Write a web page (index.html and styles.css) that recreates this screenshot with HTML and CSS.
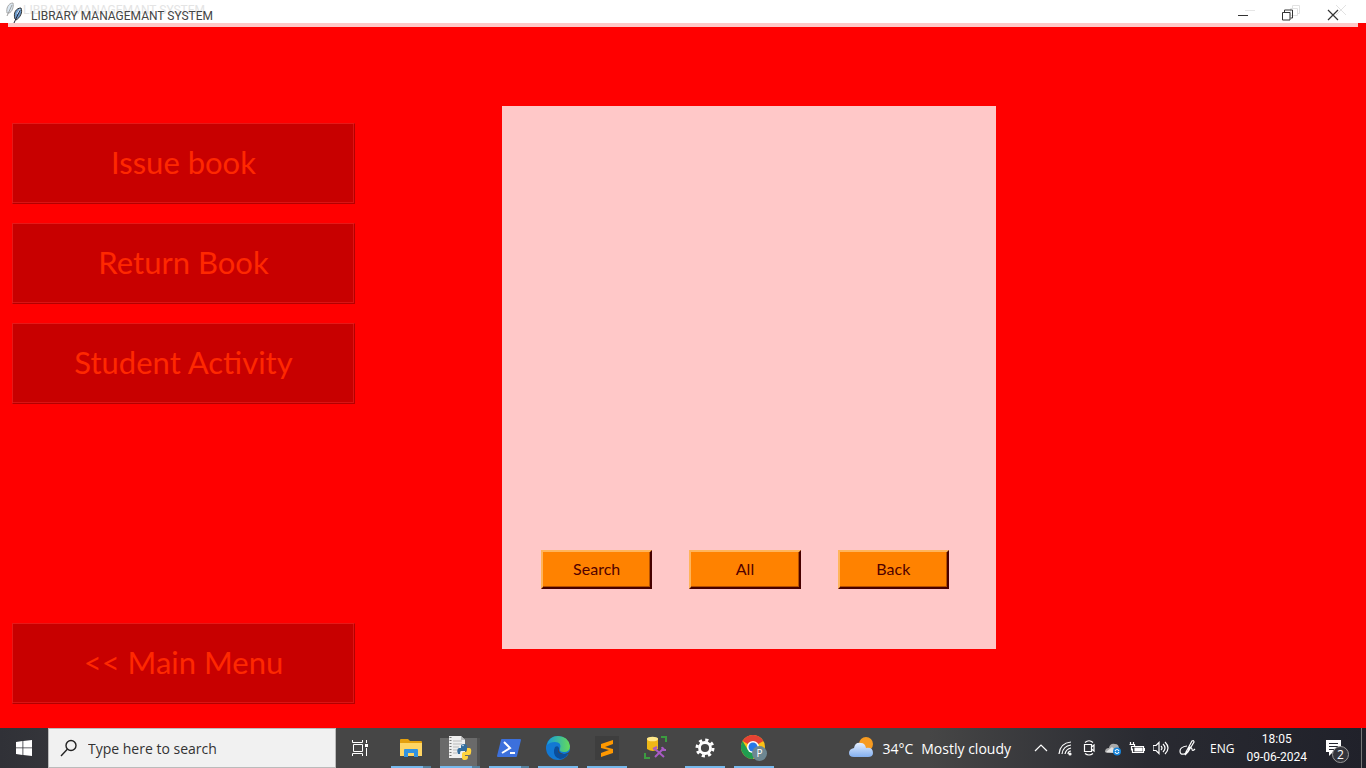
FILE: index.html
```html
<!DOCTYPE html>
<html lang="en">
<head>
<meta charset="utf-8">
<title>LIBRARY MANAGEMANT SYSTEM</title>
<link rel="stylesheet" href="styles.css">
</head>
<body>
<header class="titlebar">
  <svg class="feather" viewBox="0 0 18 22" aria-hidden="true">
    <g opacity=".5"><path d="M1 11C0 7 2 1 7 1C8 5 6 10 3 11Z" fill="#b9d2e8" stroke="#555"/><path d="M1 14L6 3" stroke="#444" fill="none"/></g>
    <path d="M9 17C7 11 10 6 15 6C17 10 14 16 10 18Z" fill="#6c9bcd" stroke="#333"/><path d="M8 21L14 8" stroke="#223" fill="none"/><path d="M11 12L14 7" stroke="#cfe4f7" fill="none"/>
  </svg>
  <span class="title-ghost" aria-hidden="true">LIBRARY MANAGEMANT SYSTEM</span>
  <h1 class="title">LIBRARY MANAGEMANT SYSTEM</h1>
  <div class="window-controls">
    <button class="window-button" aria-label="Minimize"><svg viewBox="0 0 24 20"><path d="M11 7.5h10" stroke="#e6e6e6"/><path d="M4 12.500h10" stroke="#333"/></svg></button>
    <button class="window-button" aria-label="Restore"><svg viewBox="0 0 24 20" fill="none"><path d="M11.500 5.500h7v7h-7zM13.500 5v-2.500h7v8h-2" stroke="#e2e2e2"/><path d="M3.500 9.500h7.500v7.500h-7.500zM5.500 9v-2h8v8h-2" stroke="#333"/></svg></button>
    <button class="window-button" aria-label="Close"><svg viewBox="0 0 24 20" fill="none"><path d="M12 2L22 12M22 2L12 12" stroke="#e2e2e2"/><path d="M4 7L14 17M14 7L4 17" stroke="#333" stroke-width="1.200"/></svg></button>
  </div>
</header>
<main class="workspace">
  <nav class="menu" aria-label="Library">
    <button class="menu-button">Issue book</button>
    <button class="menu-button">Return Book</button>
    <button class="menu-button">Student Activity</button>
    <button class="menu-button menu-home">&lt;&lt; Main Menu</button>
  </nav>
  <section class="panel" aria-label="Books">
    <div class="panel-actions">
      <button class="action">Search</button>
      <button class="action">All</button>
      <button class="action">Back</button>
    </div>
  </section>
</main>
<footer class="taskbar">
  <button class="start" aria-label="Start"><svg width="16" height="16" viewBox="0 0 16 16" fill="#fff"><path d="M0 2L6.500 1V7.500H0zM7.300 .9L16 0V7.500H7.300zM0 8.300H6.500V15L0 14zM7.300 8.300H16V16L7.300 15z"/></svg></button>
  <label class="search">
    <svg width="18" height="18" viewBox="0 0 18 18" fill="none" stroke="#222" stroke-width="1.400"><circle cx="11" cy="6.500" r="5"/><path d="M7.300 10.300L1 17"/></svg>
    <input class="search-input" type="text" placeholder="Type here to search" aria-label="Type here to search">
  </label>
  <button class="task-view" aria-label="Task view"><svg width="17" height="16" viewBox="0 0 17 16" fill="none" stroke="#fff"><path d="M.5 0v2.500h10V0M.5 16v-2.500h10V16M1.500 4.500h9v7h-9zM14.500 0v3M14.500 8v8"/><path d="M13 4h3v3h-3z" fill="#fff" stroke="none"/></svg></button>
  <nav class="apps" aria-label="Applications">
    <button class="app running stacked" aria-label="File Explorer"><svg viewBox="0 0 24 24"><path d="M1 4q0-1 1-1h7l2 2h11q1 0 1 1v4H1z" fill="#e5a00d"/><path d="M1 7h22v13H1z" fill="#ffd563"/><path d="M5 21v-7q0-1 1-1h12q1 0 1 1v7h-4v-4H9v4z" fill="#3292df"/></svg></button>
    <button class="app running stacked selected" aria-label="Python"><svg viewBox="0 0 24 24"><path d="M1 0h12l4 4v18H1z" fill="#eee"/><path d="M13 0v4h4" fill="#bbb"/><path d="M2.500 1v21" stroke="#777" stroke-width="2" stroke-dasharray="1 2"/><path d="M5 5h9M5 8h9M5 11h6M5 14h4M5 17h4" stroke="#bbb"/><path d="M13 14v-4q0-2 3-2t3 2v3q0 2-2 2h-4q-1 0-1 3h-2q-2-5 1-6h5" fill="#326d9e"/><path d="M19 12h2q3 0 2 5q0 2-2 2h-4v1h3v1q0 3-3 3t-3-2v-4q0-2 2-2h2q1 0 1-3z" fill="#ffd33d"/><circle cx="15" cy="9.500" r=".7" fill="#fff"/></svg></button>
    <button class="app running stacked" aria-label="PowerShell"><svg viewBox="0 0 24 24"><path d="M5 3h18q1 0 1 1l-4 16q0 1-1 1H1q-1 0-1-1L4 4q0-1 1-1z" fill="#3c70dc"/><path d="M7 6l6 6-8 5M13 17h5" fill="none" stroke="#fff" stroke-width="2"/></svg></button>
    <button class="app running" aria-label="Microsoft Edge"><svg viewBox="0 0 24 24"><defs><linearGradient id="edgeGreen"><stop stop-color="#159bdc"/><stop offset="1" stop-color="#65dc58"/></linearGradient></defs><circle cx="12" cy="12" r="12" fill="#1278d3"/><path d="M1 9Q3 0 12 0Q22 0 24 10Q24 16 18 16Q13 16 14 13Q16 6 9 6Q4 6 1 9Z" fill="url(#edgeGreen)"/><path d="M9 11Q12 9 13 12Q12 17 18 18Q21 18 23 16Q20 23 14 23Q7 21 8 14Z" fill="#0b4e9b"/><path d="M13 12Q11 16 17 18Q21 19 24 15V18L15 18Q10 16 13 12Z" fill="#484848"/></svg></button>
    <button class="app running" aria-label="Sublime Text"><svg viewBox="0 0 24 24"><path d="M0 0h24v24H0z" fill="#3e3e3e"/><path d="M6 8l12-4v4l-8 3 8 2v4L6 21v-4l8-3-8-2z" fill="#ff9800"/></svg></button>
    <button class="app" aria-label="Database tools"><svg viewBox="0 0 24 24"><path d="M3 2v11q6 4 11 0V2z" fill="#eeb817"/><ellipse cx="8.500" cy="3" rx="5.500" ry="2.300" fill="#ffe88a"/><path d="M17 1h5v5M1 17v5h5" fill="none" stroke="#3c9d40" stroke-width="2"/><path d="M11 13l9 8M20 12l-9 9M9 13l4-2M18 11l1 3 3 0" fill="none" stroke="#a95bc4" stroke-width="2"/></svg></button>
    <button class="app running" aria-label="Settings"><svg viewBox="0 0 24 24" fill="none" stroke="#fff"><circle cx="12" cy="12" r="5.500" stroke-width="2.800"/><circle cx="12" cy="12" r="8" stroke-width="3" stroke-dasharray="3.140 3.140"/></svg></button>
    <button class="app running" aria-label="Chrome, profile P"><svg class="chrome" viewBox="0 0 26 26"><circle cx="12" cy="12" r="12" fill="#fbc116"/><path d="M12 12L1.600 6A12 12 0 0 1 22.400 6z" fill="#e64234"/><path d="M1.600 6A12 12 0 0 0 12 24L17 15 7 15z" fill="#219d50"/><circle cx="12" cy="12" r="6" fill="#fff"/><circle cx="12" cy="12" r="4.500" fill="#2878e8"/><circle cx="18.500" cy="18.500" r="7.500" fill="#6d8792"/><text x="18.500" y="22" text-anchor="middle" class="profile">P</text></svg></button>
  </nav>
  <div class="tray">
    <button class="weather"><svg width="25" height="22" viewBox="0 0 25 22"><defs><linearGradient id="cloud" x2="0" y2="1"><stop stop-color="#e4efff"/><stop offset="1" stop-color="#83afef"/></linearGradient></defs><circle cx="17" cy="7" r="7" fill="#f79b20"/><path d="M5 20q-5 0-5-4t5-5q1-6 7-5 4 0 5 5 7-1 7 5 0 4-5 4z" fill="url(#cloud)"/></svg><span>34°C</span><span>Mostly cloudy</span></button>
    <div class="tray-icons">
      <button class="tray-button" aria-label="Show hidden icons"><svg viewBox="0 0 16 16"><path d="M2 11l6-6 6 6"/></svg></button>
      <button class="tray-button" aria-label="Network"><svg viewBox="0 0 16 16"><path d="M2 14Q3 3 14 2M5 14Q6 6 14 5M8 14Q9 9 14 8M11 14Q11 11 14 11"/><circle cx="13" cy="14" r="1" fill="#fff"/></svg></button>
      <button class="tray-button" aria-label="Camera"><svg viewBox="0 0 16 16"><path d="M3.500 4.500h7v7h-7zM10.500 7l2.500-2v6l-2.500-2M4 2.500Q8-1 12 2.500M4 13.500q4 3 8 0"/></svg></button>
      <button class="tray-button" aria-label="OneDrive"><svg viewBox="0 0 16 16"><path d="M0 12q0-4 4-4 1-5 6-4 4 0 4 5v4H2z" fill="#aaa" stroke="none"/><path d="M1 12L7 7l6 6z" fill="#e3e3e3" stroke="none"/><circle cx="12" cy="11.500" r="4" fill="#1683d8" stroke="none"/><path d="M10 11q2-3 4 0M14 12q-2 3-4 0"/></svg></button>
      <button class="tray-button" aria-label="Battery"><svg viewBox="0 0 16 16"><path d="M4.500 6.500h10v6h-11v-4M15.500 8v3M1.500 2v3M4.500 2v3M.5 4.500h5v2H2.500v4"/><path d="M6 8h7v3H6z" fill="#fff"/></svg></button>
      <button class="tray-button" aria-label="Volume"><svg viewBox="0 0 16 16"><path d="M0 5.500h3l3-3v11l-3-3H0zM8 6q2 2 0 4M10 4q4 4 0 8M12 2q6 6 0 12"/></svg></button>
    </div>
    <button class="pen" aria-label="Pen workspace"><svg width="18" height="18" viewBox="0 0 18 18"><path d="M7 13L13 2q2-1 2 1L9 13l-3 3zM8 7Q1 8 1 12t4 3q4-1 5-5t3 0q0 3 3 0"/></svg></button>
    <button class="language">ENG</button>
    <button class="clock"><time datetime="2024-06-09T18:05"><span>18:05</span><span>09-06-2024</span></time></button>
    <button class="notifications" aria-label="2 notifications"><svg width="18" height="18" viewBox="0 0 18 18"><path d="M1 1h15v12H8l-4 4v-4H1z" fill="#fff"/><path d="M4 4.500h9M4 7.500h9M4 10.500h5" stroke="#252630"/></svg><span class="badge">2</span></button>
  </div>
</footer>
</body>
</html>
```
FILE: styles.css
```css
* { box-sizing: border-box; }
body {
  margin: 0;
  min-height: 100vh;
  display: flex;
  flex-direction: column;
  background: #f00;
  font-family: "Segoe UI", "Open Sans", sans-serif;
}
button { padding: 0; border: 0; background: none; color: inherit; font: inherit; }
svg { display: block; }

.titlebar {
  position: relative;
  flex: none;
  display: flex;
  align-items: flex-start;
  height: 23px;
  padding-left: 6px;
  background: #fff;
}
.feather { width: 18px; height: 22px; margin-top: 2px; }
.title, .title-ghost { font: 12px/16px "Segoe UI", Roboto, sans-serif; }
.title { position: relative; margin: 8px 0 0 7px; color: #444; }
.title-ghost { position: absolute; left: 23px; top: 2px; color: #e4e4e4; }
.window-controls { display: flex; margin-left: auto; padding: 3px 8px 0 0; }
.window-button { display: flex; justify-content: center; width: 45px; }
.window-button svg { width: 24px; height: 20px; flex: none; }

.workspace {
  flex: 1;
  display: grid;
  grid-template-columns: 502fr 494fr 370fr;
  position: relative;
}
.workspace::before {
  content: "";
  position: absolute;
  inset: 0 8px auto;
  height: 4px;
  background: #ffc8c8;
}
.menu {
  display: flex;
  flex-direction: column;
  align-items: flex-start;
  gap: 19px;
  padding: 100px 0 24px 12px;
}
.menu-button {
  width: 70%;
  height: 81px;
  padding-bottom: 4px;
  border: 1px solid;
  border-color: #e61919 #b40000 #b40000 #e61919;
  box-shadow: inset -1px -1px #dc1414;
  background: #c80000;
  color: #ff2800;
  font-family: Papyrus, Lato, sans-serif;
  font-size: 31px;
}
.menu-home { margin-top: auto; }
.panel {
  display: flex;
  flex-direction: column;
  justify-content: flex-end;
  margin: 83px 0 79px;
  padding: 0 47px 60px 39px;
  background: #ffc8c8;
}
.panel-actions { display: grid; grid-template-columns: repeat(3, 1fr); gap: 37px; }
.action {
  height: 39px;
  padding-bottom: 2px;
  border: 2px solid;
  border-color: #ffb45a #460000 #460000 #ffb45a;
  box-shadow: inset -1px -1px #b45000;
  background: #ff8200;
  color: #500000;
  font-family: Papyrus, Lato, sans-serif;
  font-size: 16px;
}

.taskbar {
  flex: none;
  display: flex;
  height: 40px;
  background: linear-gradient(90deg, #303137, #464646 20%, #464646 68%, #292a31 84%, #20212a);
  color: #fff;
}
.start, .task-view { display: grid; place-items: center; width: 48px; }
.search {
  display: flex;
  align-items: center;
  gap: 10px;
  width: 288px;
  padding: 0 11px;
  border: 1px solid #bbb;
  background: #f1f1f1;
}
.search-input {
  flex: 1;
  min-width: 0;
  padding: 0;
  border: 0;
  outline: 0;
  background: none;
  font: 14px "Segoe UI", "Open Sans", sans-serif;
}
.search-input::placeholder { color: #333; opacity: 1; }
.apps { display: flex; gap: 9px; padding-left: 7px; }
.app { display: grid; place-items: center; width: 40px; padding-top: 2px; border-bottom: 2px solid transparent; }
.app svg { width: 24px; height: 24px; }
.app .chrome { width: 26px; height: 26px; }
.running { border-color: #76b9ed; }
.stacked { border-image: linear-gradient(90deg, #76b9ed 78%, #55829f 78%) 2; }
.selected { background: linear-gradient(90deg, #6a6a6a 92%, #505050 92%) 0 10px no-repeat; }
.profile { fill: #fff; font: 10px "Open Sans", sans-serif; }

.tray { display: flex; align-items: center; margin-left: auto; padding-right: 4px; position: relative; }
.tray::after { content: ""; width: 1px; height: 40px; background: #777; }
.weather { display: flex; align-items: center; gap: 8px; margin-right: 18px; font-size: 14px; }
.tray-icons { display: flex; }
.tray-button { display: grid; place-items: center; width: 24px; height: 40px; }
.tray-button svg { width: 16px; height: 16px; }
.tray-button svg, .pen svg { fill: none; stroke: #fff; stroke-width: 1.200; }
.pen { margin: 0 13px 0 6px; }
.language { font-size: 12px; }
.clock { margin-left: 12px; font: 12px/18px "Segoe UI", Roboto, sans-serif; }
.clock span { display: block; }
.notifications { position: relative; width: 54px; height: 40px; display: grid; place-items: center; }
.badge {
  position: absolute;
  left: 25px;
  top: 18px;
  width: 17px;
  height: 17px;
  border: 1px solid #999;
  border-radius: 50%;
  background: #34353c;
  font-size: 12px;
  line-height: 15px;
}
```
